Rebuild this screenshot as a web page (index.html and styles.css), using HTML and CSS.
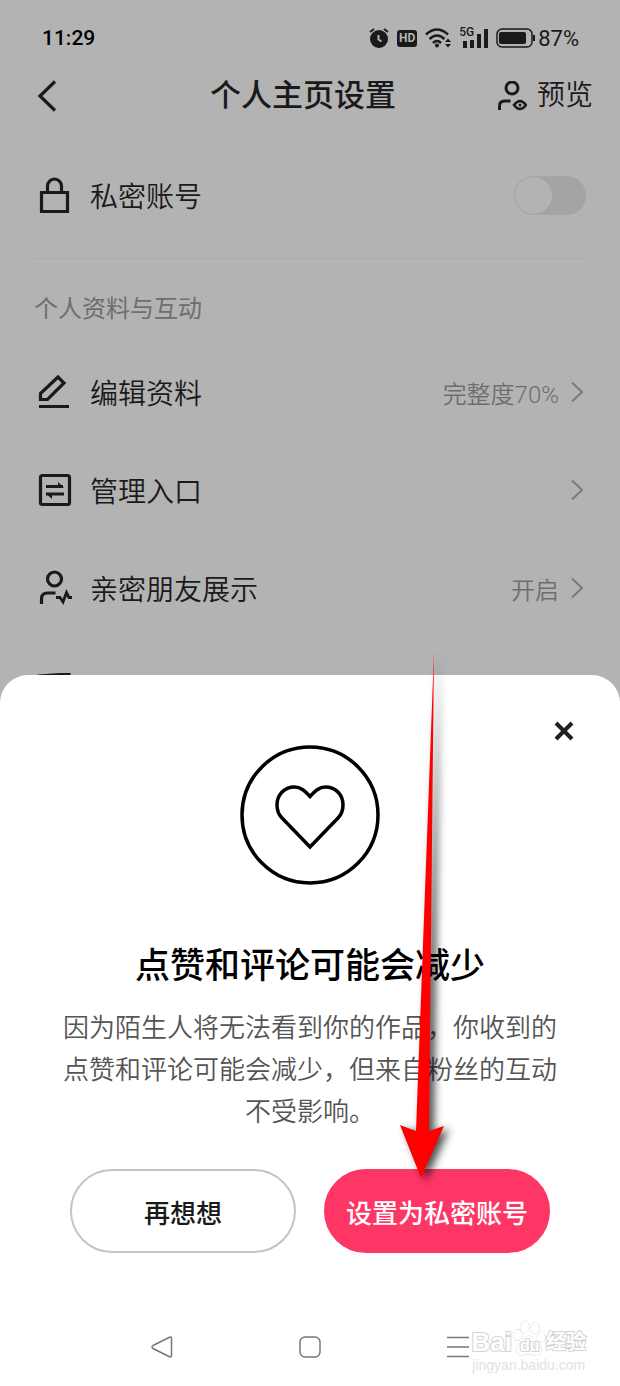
FILE: index.html
```html
<!DOCTYPE html>
<html lang="zh-CN">

<head>
  <meta charset="UTF-8" />
  <meta name="viewport" content="width=device-width, initial-scale=1.0" />
  <title>个人主页设置</title>
  <link rel="stylesheet" href="styles.css">
</head>

<body>
  <div class="screen">
    <div class="status">
      <time>11:29</time>
      <div class="status-icons">
        <svg width="20" height="22" viewBox="0 0 20 22">
          <circle cx="10" cy="12" r="9" fill="#1a1a1a" />
          <path d="M1 5l4-3M19 5l-4-3" stroke="#1a1a1a" stroke-width="2" />
          <path d="M9.5 8v4.500l3 2" fill="none" stroke="#b3b3b3" stroke-width="2" />
        </svg>
        <span class="hd">HD</span>
        <svg width="27" height="22" viewBox="0 0 27 22" fill="none" stroke="#1a1a1a" stroke-width="2.500">
          <path d="M1 7.500q11-10 22 0M4.500 12q7.500-7 15 0M8 16q4-4 8 0" />
          <circle cx="12" cy="18.500" r="2" fill="#1a1a1a" stroke="none" />
          <path d="M20 15l3-3.500 3 3.500zM20 17l3 3.500 3-3.500z" fill="#1a1a1a" stroke="none" />
        </svg>
        <span class="signal">
          <span class="net">5G</span>
          <svg width="28" height="20" viewBox="0 0 28 20" fill="#1a1a1a">
            <path d="M3 13h4v7H3zM10 12h4v8h-4zM17 6h4v14h-4zM24 1h4v19h-4z" />
          </svg>
        </span>
        <svg width="39" height="20" viewBox="0 0 39 20">
          <rect x="1" y="1" width="35" height="18" rx="5" fill="none" stroke="#1a1a1a" stroke-width="1.500" />
          <rect x="3" y="4" width="27" height="12" rx="2" fill="#1a1a1a" />
          <path d="M38 7v6" stroke="#1a1a1a" stroke-width="2" />
        </svg>
        <span class="percent">87%</span>
      </div>
    </div>

    <header class="header">
      <button class="back" aria-label="返回">
        <svg width="20" height="32" viewBox="0 0 20 32" fill="none" stroke="#1a1a1a" stroke-width="3.200">
          <path d="M18 1.500L3 16l15 14.500" />
        </svg>
      </button>
      <h1>个人主页设置</h1>
      <button class="preview">
        <svg width="30" height="30" viewBox="0 0 30 30" fill="none" stroke="#1a1a1a" stroke-width="3">
          <circle cx="15" cy="7" r="6" />
          <path d="M2.500 29v-4q0-5 5-5h6" />
          <path d="M17 24q6-8 12 0q-6 8-12 0z" stroke-width="2.500" />
          <circle cx="23" cy="24" r="1.500" fill="#1a1a1a" stroke="none" />
        </svg>
        预览
      </button>
    </header>

    <main>
      <label class="row">
        <svg class="icon" width="36" height="36" viewBox="0 0 36 36" fill="none" stroke="#1a1a1a" stroke-width="3.200">
          <path d="M5.500 15.500h26v19h-26zM11.500 15v-6a7 7 0 0 1 14 0v6" />
        </svg>
        <span class="name">私密账号</span>
        <input class="switch" type="checkbox" role="switch">
      </label>
      <hr>
      <h2>个人资料与互动</h2>
      <a class="row" href="#">
        <svg class="icon" width="36" height="36" viewBox="0 0 36 36" fill="none" stroke="#1a1a1a" stroke-width="3.200">
          <path d="M4.500 25.500v-6L22 3l6 6-16.500 16.500zM3 32.500h30" />
        </svg>
        <span class="name">编辑资料</span>
        <span class="value">完整度70%</span>
        <svg class="arrow" width="14" height="22" viewBox="0 0 14 22"><path d="M2 1.500L12 11 2 20.500" /></svg>
      </a>
      <a class="row" href="#">
        <svg class="icon" width="36" height="36" viewBox="0 0 36 36" fill="none" stroke="#1a1a1a" stroke-width="3.200">
          <rect x="4.500" y="3.500" width="29" height="29" rx="2" />
          <path d="M10 14.500h17M10 22h18" stroke-width="2.800" />
          <path d="M22 10l6 5.500h-6zM16 27L10 21.500h6z" fill="#1a1a1a" stroke="none" />
        </svg>
        <span class="name">管理入口</span>
        <svg class="arrow" width="14" height="22" viewBox="0 0 14 22"><path d="M2 1.500L12 11 2 20.500" /></svg>
      </a>
      <a class="row" href="#">
        <svg class="icon" width="36" height="36" viewBox="0 0 36 36" fill="none" stroke="#1a1a1a" stroke-width="3.200">
          <circle cx="18.500" cy="9" r="7" />
          <path d="M5.500 34v-5q0-6 6-6h8" />
          <path d="M20 27.500h4l3 4.500 3.500-9.500 2.500 5h4" stroke-width="2.800" />
        </svg>
        <span class="name">亲密朋友展示</span>
        <span class="value">开启</span>
        <svg class="arrow" width="14" height="22" viewBox="0 0 14 22"><path d="M2 1.500L12 11 2 20.500" /></svg>
      </a>
      <a class="row last" href="#">
        <svg class="icon" width="36" height="36" viewBox="0 0 36 36" fill="none" stroke="#1a1a1a" stroke-width="3.200">
          <path d="M3 3l30-2v30H4zM4 14h29" />
        </svg>
        <span class="name">谁可以私信我</span>
      </a>
    </main>

    <section class="sheet" role="dialog" aria-labelledby="sheet-title">
      <button class="close" aria-label="关闭">
        <svg width="20" height="20" viewBox="0 0 20 20" stroke="#1f1f1f" stroke-width="4"><path d="M2 2l16 16M18 2L2 18" /></svg>
      </button>
      <svg class="heart" width="140" height="140" viewBox="0 0 140 140" fill="none" stroke="#000" stroke-width="3.500">
        <circle cx="70" cy="70" r="68" />
        <path d="M70 51.500C65 46 61 42 54.500 42C44 42 37 50 37 60c0 6 2 10 5 13L70 102l28-29c3-3 5-7 5-13C103 50 96 42 85.500 42C79 42 75 46 70 51.500z" />
      </svg>
      <h2 id="sheet-title">点赞和评论可能会减少</h2>
      <p>因为陌生人将无法看到你的作品，你收到的点赞和评论可能会减少，但来自粉丝的互动不受影响。</p>
      <div class="actions">
        <button class="btn">再想想</button>
        <button class="btn primary">设置为私密账号</button>
      </div>
      <nav class="nav">
        <button aria-label="返回">
          <svg width="22" height="22" viewBox="0 0 22 22"><path d="M2 9.500L18.500 1.300q2-.8 2 1.200v17q0 2-2 1.200L2 12.500q-2-1.500 0-3z" /></svg>
        </button>
        <button aria-label="主页">
          <svg width="22" height="22" viewBox="0 0 22 22"><rect x="1" y="1" width="20" height="20" rx="5" /></svg>
        </button>
        <button aria-label="菜单">
          <svg width="22" height="22" viewBox="0 0 22 22"><path d="M0 1.500h22M0 11h22M0 20.500h22" /></svg>
        </button>
      </nav>
      <svg class="pointer" width="60" height="540" viewBox="0 0 60 540">
        <path d="M42 0L37 480l15-5-23 52L8 474l16 6z" fill="#f00" />
      </svg>
      <div class="watermark">
        <div class="brand">
          <span>Bai</span>
          <span class="paw">
            <svg width="34" height="36" viewBox="0 0 34 36" fill="#fff" stroke="#d4d4d4">
              <ellipse cx="6" cy="15" rx="4" ry="5.500" />
              <ellipse cx="13" cy="7" rx="4" ry="6" />
              <ellipse cx="23" cy="8" rx="4" ry="6" />
              <ellipse cx="29" cy="17" rx="4" ry="5" />
              <path d="M17 16c5 0 6 6 11 10 4 5 0 10-5 9-4-1-8-1-12 0-6 1-9-5-5-9 4-4 6-10 11-10z" />
            </svg>
            <span class="du">du</span>
          </span>
          <span class="cn">经验</span>
        </div>
        <div class="site">jingyan.baidu.com</div>
      </div>
    </section>
  </div>
</body>

</html>
```
FILE: styles.css
```css
* { box-sizing: border-box; }

body {
  margin: 0;
  font-family: Roboto, "Noto Sans CJK SC", sans-serif;
  color: #1a1a1a;
  background: #b3b3b3;
}

button {
  padding: 0;
  border: 0;
  background: none;
  font: inherit;
  color: inherit;
}

svg { display: block; flex: none; }
h1, h2, p { margin: 0; }

.screen {
  position: relative;
  min-height: 100vh;
  overflow: hidden;
}

/* status bar */
.status {
  display: flex;
  align-items: center;
  justify-content: space-between;
  height: 76px;
  padding: 0 41px 0 42px;
  font-size: 22px;
}
.status time { font-size: 21px; font-weight: 500; color: #000; }
.status-icons { display: flex; align-items: center; gap: 8px; }
.hd {
  width: 20px;
  border-radius: 3px;
  background: #1a1a1a;
  color: #b3b3b3;
  font-size: 12px;
  font-weight: 700;
  line-height: 17px;
  text-align: center;
}
.signal { position: relative; }
.net { position: absolute; left: -1px; top: -2px; font-size: 12px; font-weight: 500; line-height: 12px; }
.percent { margin-left: -5px; }

/* title bar */
.header {
  display: grid;
  grid-template-columns: 1fr auto 1fr;
  align-items: center;
  height: 40px;
  margin-bottom: 30px;
  padding: 0 27px 0 37px;
}
.header h1 { padding-right: 24px; font-size: 31px; font-weight: 500; line-height: 40px; }
.back { justify-self: start; }
.preview {
  display: flex;
  align-items: center;
  justify-self: end;
  gap: 10px;
  font-size: 28px;
  font-weight: 350;
  line-height: 40px;
}

/* settings list */
main { padding: 0 34px; }
.row {
  display: flex;
  align-items: center;
  height: 98px;
  color: inherit;
  text-decoration: none;
}
.last { height: 108px; }
.icon { margin: 0 18px 0 2px; }
.name { flex: 1; font-size: 28px; font-weight: 350; }
.value { margin-right: 11px; font-size: 24px; font-weight: 350; color: #6e6e6e; }
.arrow { margin-right: 2px; fill: none; stroke: #7a7a7a; stroke-width: 2; }
.switch {
  appearance: none;
  width: 72px;
  height: 39px;
  margin: 0;
  padding: 1px;
  border-radius: 20px;
  background: #a4a4a4;
}
.switch::before {
  content: "";
  display: block;
  width: 37px;
  height: 37px;
  border-radius: 50%;
  background: #b3b3b3;
}
.switch:checked::before { margin-left: auto; }
hr { height: 1px; margin: 14px 0 32px; border: 0; background: #ababab; }
main h2 {
  margin-bottom: 16px;
  font-size: 24px;
  font-weight: 400;
  line-height: 36px;
  color: #6e6e6e;
}

/* bottom sheet */
.sheet {
  position: absolute;
  left: 0;
  right: 0;
  bottom: 0;
  display: flex;
  flex-direction: column;
  align-items: center;
  padding-top: 70px;
  border-radius: 28px 28px 0 0;
  background: #fff;
}
.close { position: absolute; top: 46px; right: 46px; }
.sheet h2 {
  margin-top: 58px;
  font-size: 35px;
  font-weight: 500;
  line-height: 48px;
  color: #000;
}
.sheet p {
  max-width: 504px;
  margin-top: 16px;
  font-size: 26px;
  font-weight: 350;
  line-height: 42px;
  text-align: center;
  color: #555;
}
.actions {
  display: flex;
  gap: 28px;
  width: 100%;
  margin-top: 36px;
  padding: 0 70px;
}
.btn {
  flex: 1;
  height: 84px;
  border: 2px solid #c4c4c4;
  border-radius: 42px;
  font-size: 26px;
  font-weight: 500;
  white-space: nowrap;
}
.primary { border-color: #fe3666; background: #fe3666; color: #fff; }

.nav {
  display: grid;
  grid-template-columns: repeat(3, 148px);
  place-items: center;
  height: 78px;
  margin-top: 55px;
}
.nav svg { fill: none; stroke: #777; stroke-width: 1.5; }

.pointer {
  position: absolute;
  top: -24px;
  left: calc(50% + 82px);
  overflow: visible;
  filter: drop-shadow(5px 3px 4px rgba(0, 0, 0, 0.7));
  pointer-events: none;
}

/* watermark */
.watermark {
  position: absolute;
  right: 34px;
  bottom: 12px;
  font-family: "Liberation Sans", "Noto Sans CJK SC", sans-serif;
  color: #fff;
  -webkit-text-stroke: 2px #d4d4d4;
  paint-order: stroke fill;
}
.brand { display: flex; align-items: flex-end; font-size: 26px; font-weight: 700; line-height: 28px; }
.paw { position: relative; }
.du { position: absolute; left: 8px; bottom: 0; font-size: 16px; line-height: 20px; }
.cn { font-size: 20px; }
.site { font-size: 14px; line-height: 18px; text-align: center; -webkit-text-stroke: 0; color: #e2e2e2; }
```
